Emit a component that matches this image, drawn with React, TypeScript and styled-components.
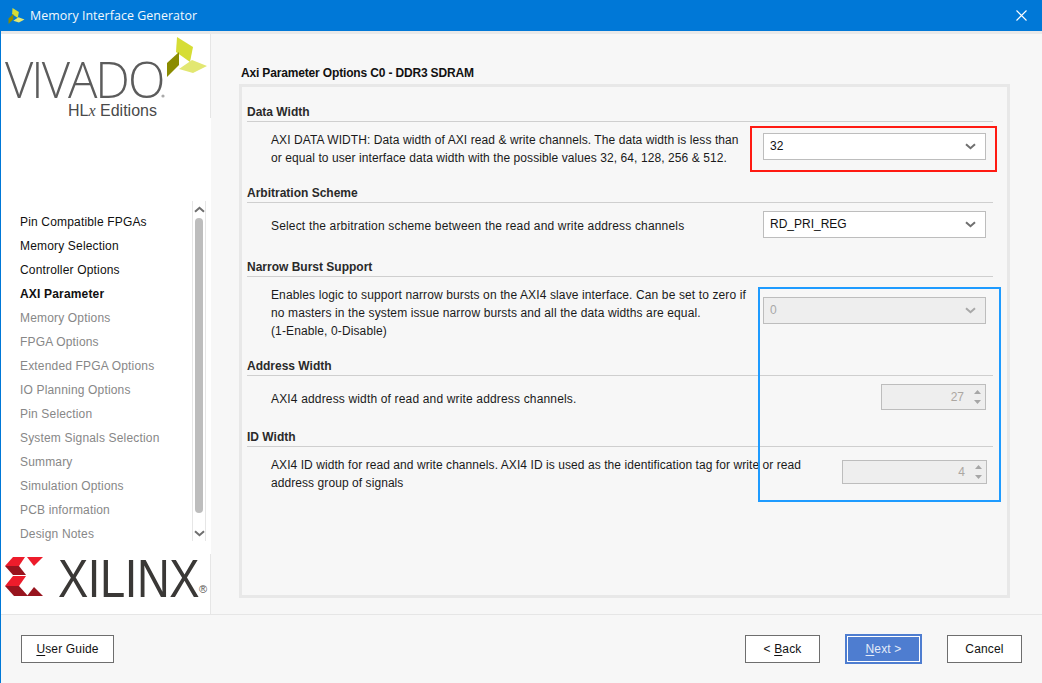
import React from "react";
import styled, { createGlobalStyle } from "styled-components";

const Global = createGlobalStyle`
  html, body { margin: 0; padding: 0; background: #f7f7f7; }
  body { font-family: "Liberation Sans", Arial, sans-serif; font-size: 12px; color: #111; }
  * { box-sizing: border-box; }
`;

const Window = styled.div`
  width: 1042px; height: 683px; display: flex; flex-direction: column;
  border-left: 1px solid #0078d7; background: #f7f7f7; overflow: hidden; position: relative;
`;
const TitleBar = styled.header`
  height: 31px; flex: none; background: #0078d7; display: flex; align-items: center;
  margin-left: -1px; padding: 0 15px 0 8px; color: #f2f8fd;
`;
const TitleText = styled.span`
  font-family: "Open Sans", sans-serif; font-size: 12.4px; margin-left: 5px; flex: 1; letter-spacing: 0.06px;
`;
const Strip = styled.div`height: 3px; flex: none; background: #e9e9e9;`;
const Body = styled.div`flex: 1; display: flex; min-height: 0;`;
const Sidebar = styled.aside`width: 210px; flex: none; display: flex; flex-direction: column; background: #fff;`;
const TopLogo = styled.div`
  height: 84px; flex: none; border-right: 1px solid #e6e6e6; position: relative;
`;
const LogoSvg = styled.svg`position: absolute; left: 0; top: 0; overflow: visible;`;
const VivadoWord = styled.div`
  font-family: "Open Sans", sans-serif; font-weight: 300; font-size: 49px; line-height: 44px; color: #5c5c5c;
  padding: 23px 0 0 4px; letter-spacing: -2px; height: 67px;
`;
const Edition = styled.div`
  font-family: "Liberation Sans", sans-serif; font-size: 16px; line-height: 16px; color: #4a4a4a;
  position: absolute; left: 67px; top: 69px;
  i { font-family: "Liberation Serif", serif; font-size: 16px; }
`;
const NavArea = styled.nav`
  height: 436px; flex: none; position: relative; padding: 92px 0 0 19px;
`;
const NavItem = styled.div<{ $state: "done" | "active" | "todo" }>`
  height: 24px; line-height: 24px; font-size: 12px; white-space: nowrap;
  letter-spacing: 0.17px;
  color: ${p => (p.$state === "todo" ? "#878787" : "#101010")};
  font-weight: ${p => (p.$state === "active" ? 700 : 400)};
`;
const Scroll = styled.div`
  position: absolute; left: 191px; top: 83px; width: 14px; height: 340px;
  border-left: 1px solid #e6e6e6; border-right: 1px solid #e6e6e6;
  display: flex; flex-direction: column; align-items: center; justify-content: space-between;
  background: #fff;
`;
const Thumb = styled.div`
  width: 8px; flex: 1; margin: 5px 0 17px; background: #bdbdbd; border-radius: 4px;
`;
const ScrollBtn = styled.svg`flex: none; margin: 5px 0 0; &:last-child { margin: 0 0 4px; }`;
const BottomLogo = styled.div`
  flex: 1; border-right: 1px solid #e6e6e6; position: relative; padding: 0 0 0 57px;
`;
const XilinxWord = styled.div`
  font-family: "Liberation Sans", sans-serif; font-size: 53px; line-height: 50px; color: #3a3836;
  white-space: nowrap; display: flex;
`;
const XilinxText = styled.span`
  display: block; width: 141px; transform: scaleX(0.855); transform-origin: left center; letter-spacing: -0.5px;
`;
const Registered = styled.span`
  font-size: 11px; line-height: 11px; margin: 30px 0 0 0; color: #55514e;
`;
const Main = styled.main`flex: 1; padding: 31px 32px 0 28px; min-width: 0;`;
const PageTitle = styled.h1`
  margin: 0 0 0 2px; font-size: 12px; font-weight: 700; line-height: 16px; height: 19px; color: #111;
  letter-spacing: -0.16px;
`;
const Panel = styled.section`
  width: 771px; height: 514px; margin-left: 0; border: 3px solid #e8e8e8; padding: 16px 14px 0 5px;
`;
const Section = styled.div<{ $h: number }>`height: ${p => p.$h}px;`;
const Heading = styled.h2`
  margin: 0; height: 19px; line-height: 18px; font-size: 12px; font-weight: 700; color: #2a2a2a;
  border-bottom: 1px solid #cfcfcf;
`;
const Row = styled.div`display: flex; justify-content: space-between; align-items: flex-start;`;
const Desc = styled.p<{ $top: number; $w: number; $ls: number }>`
  margin: ${p => p.$top}px 0 0 24px; width: ${p => p.$w}px; font-size: 12px; line-height: 18px; color: #1a1a1a;
  letter-spacing: ${p => p.$ls}px;
`;
const Select = styled.div<{ $top: number; $off?: boolean }>`
  width: 223px; height: 27px; margin: ${p => p.$top}px 7px 0 0; display: flex; align-items: center;
  justify-content: space-between; padding: 0 9px 1px 6px; font-size: 12px;
  border: 1px solid #bdbdbd; background: ${p => (p.$off ? "#eeeeee" : "#fff")};
  color: ${p => (p.$off ? "#a8a8a8" : "#111")};
`;
const Spinner = styled.div<{ $top: number; $w: number; $h: number; $r: number }>`
  width: ${p => p.$w}px; height: ${p => p.$h}px; margin: ${p => p.$top}px ${p => p.$r}px 0 0; display: flex;
  align-items: center; justify-content: flex-end; font-size: 12px; color: #aca7a2;
  border: 1px solid #bdbdbd; background: #eeeeee; padding: 0 4px 0 0; gap: 10px;
`;
const Steps = styled.div`display: flex; flex-direction: column; gap: 6px;`;
const Footer = styled.footer`
  height: 69px; flex: none; border-top: 1px solid #e6e6e6; display: flex; align-items: flex-start;
  padding: 20px 20px 0 20px;
`;
const Btn = styled.button<{ $w: number; $primary?: boolean; $ml?: number }>`
  width: ${p => p.$w}px; height: ${p => (p.$primary ? 26 : 28)}px; margin: ${p => (p.$primary ? 1 : 0)}px 0 0 ${p => p.$ml ?? 0}px; padding: 0;
  font-family: "Liberation Sans", sans-serif; font-size: 12px; letter-spacing: 0.15px;
  background: ${p => (p.$primary ? "#4e7dd0" : "#fff")};
  color: ${p => (p.$primary ? "#e4ebf8" : "#111")};
  border: 1px solid ${p => (p.$primary ? "#fff" : "#6e6e6e")};
  outline: ${p => (p.$primary ? "2px solid #4e7dd0" : "none")};
  u { text-underline-offset: 2px; }
`;
const Mark = styled.div<{ $c: string }>`
  position: absolute; border: 2px solid ${p => p.$c}; pointer-events: none;
`;
const RedMark = styled(Mark)`left: 749px; top: 126px; width: 247px; height: 46px;`;
const BlueMark = styled(Mark)`left: 757px; top: 287px; width: 243px; height: 215px;`;

const Chevron = ({ off }: { off?: boolean }) => (
  <svg width="11" height="7" viewBox="0 0 11 7"><path d="M1 1.2 5.5 5.2 10 1.2" fill="none" stroke={off ? "#a8a8a8" : "#6f6f6f"} strokeWidth="2" /></svg>
);
const Arrow = ({ up }: { up?: boolean }) => (
  <svg width="7" height="4" viewBox="0 0 7 4" style={{ display: "block" }}><path d={up ? "M3.5 0 7 4H0Z" : "M0 0H7L3.5 4Z"} fill="#a6a6a6" /></svg>
);
const Leaves = () => (
  <g>
    <polygon points="177,37 193,47 190,62 176,52" fill="#d6dd35" />
    <polygon points="179,52 179,65 167,77 167,63" fill="#8a8b00" />
    <polygon points="192,60 207,66 193,73 179,69" fill="#e2e772" />
  </g>
);

const nav: [string, "done" | "active" | "todo"][] = [
  ["Pin Compatible FPGAs", "done"], ["Memory Selection", "done"], ["Controller Options", "done"],
  ["AXI Parameter", "active"], ["Memory Options", "todo"], ["FPGA Options", "todo"],
  ["Extended FPGA Options", "todo"], ["IO Planning Options", "todo"], ["Pin Selection", "todo"],
  ["System Signals Selection", "todo"], ["Summary", "todo"], ["Simulation Options", "todo"],
  ["PCB information", "todo"], ["Design Notes", "todo"],
];

export default function App() {
  return (
    <Window>
      <Global />
      <TitleBar>
        <svg width="17" height="16" viewBox="167 37 40 40">
          <Leaves />
        </svg>
        <TitleText>Memory Interface Generator</TitleText>
        <svg width="11" height="11" viewBox="0 0 11 11"><path d="M.5.5 10.5 10.5M10.5.5.5 10.5" stroke="#fff" strokeWidth="1.1" /></svg>
      </TitleBar>
      <Strip />
      <Body>
        <Sidebar>
          <TopLogo>
            <VivadoWord>VIVADO</VivadoWord>
            <Edition>HL<i>x</i> Editions</Edition>
            <LogoSvg width="209" height="84" viewBox="1 34 209 84"><Leaves /><circle cx="163" cy="96" r="1.6" fill="#aaa" /></LogoSvg>
          </TopLogo>
          <NavArea>
            {nav.map(([t, s]) => <NavItem key={t} $state={s}>{t}</NavItem>)}
            <Scroll>
              <ScrollBtn width="11" height="7" viewBox="0 0 11 7"><path d="M1 5.8 5.5 1.8 10 5.8" fill="none" stroke="#6f6f6f" strokeWidth="2" /></ScrollBtn>
              <Thumb />
              <ScrollBtn width="11" height="7" viewBox="0 0 11 7"><path d="M1 1.2 5.5 5.2 10 1.2" fill="none" stroke="#6f6f6f" strokeWidth="2" /></ScrollBtn>
            </Scroll>
          </NavArea>
          <BottomLogo>
            <LogoSvg width="50" height="60" viewBox="1 554 50 60">
              <polygon points="13,557 25,557 19,566 5,566" fill="#ed1c2b" />
              <polygon points="5,566 19,566 26,575 13,575" fill="#98141e" />
              <polygon points="13,576 26,576 19,586 5,586" fill="#ed1c2b" />
              <polygon points="5,586 19,586 28,596 14,596" fill="#98141e" />
              <polygon points="27,557 43,557 34,566" fill="#ed1c2b" />
              <polygon points="27,596 43,596 34,587" fill="#98141e" />
            </LogoSvg>
            <XilinxWord><XilinxText>XILINX</XilinxText><Registered>®</Registered></XilinxWord>
          </BottomLogo>
        </Sidebar>
        <Main>
          <PageTitle>Axi Parameter Options C0 - DDR3 SDRAM</PageTitle>
          <Panel>
            <Section $h={81}>
              <Heading>Data Width</Heading>
              <Row>
                <Desc $top={9} $w={470} $ls={0.08}>AXI DATA WIDTH: Data width of AXI read &amp; write channels. The data width is less than or equal to user interface data width with the possible values 32, 64, 128, 256 &amp; 512.</Desc>
                <Select $top={11}>32<Chevron /></Select>
              </Row>
            </Section>
            <Section $h={74}>
              <Heading>Arbitration Scheme</Heading>
              <Row>
                <Desc $top={14} $w={480} $ls={0.17}>Select the arbitration scheme between the read and write address channels</Desc>
                <Select $top={8}>RD_PRI_REG<Chevron /></Select>
              </Row>
            </Section>
            <Section $h={99}>
              <Heading>Narrow Burst Support</Heading>
              <Row>
                <Desc $top={9} $w={480} $ls={0.12}>Enables logic to support narrow bursts on the AXI4 slave interface. Can be set to zero if no masters in the system issue narrow bursts and all the data widths are equal.<br />(1-Enable, 0-Disable)</Desc>
                <Select $top={20} $off>0<Chevron off /></Select>
              </Row>
            </Section>
            <Section $h={71}>
              <Heading>Address Width</Heading>
              <Row>
                <Desc $top={14} $w={480} $ls={0.16}>AXI4 address width of read and write address channels.</Desc>
                <Spinner $top={8} $w={105} $h={26} $r={7}>27<Steps><Arrow up /><Arrow /></Steps></Spinner>
              </Row>
            </Section>
            <Section $h={70}>
              <Heading>ID Width</Heading>
              <Row>
                <Desc $top={9} $w={540} $ls={0.07}>AXI4 ID width for read and write channels. AXI4 ID is used as the identification tag for write or read address group of signals</Desc>
                <Spinner $top={13} $w={145} $h={24} $r={6}>4<Steps><Arrow up /><Arrow /></Steps></Spinner>
              </Row>
            </Section>
          </Panel>
        </Main>
      </Body>
      <Footer>
        <Btn $w={93}><u>U</u>ser Guide</Btn>
        <Btn $w={75} $ml={631}>&lt; <u>B</u>ack</Btn>
        <Btn $w={73} $ml={27} $primary><u>N</u>ext &gt;</Btn>
        <Btn $w={75} $ml={27}>Cancel</Btn>
      </Footer>
      <RedMark $c="#ff1a12" />
      <BlueMark $c="#1e9bff" />
    </Window>
  );
}
